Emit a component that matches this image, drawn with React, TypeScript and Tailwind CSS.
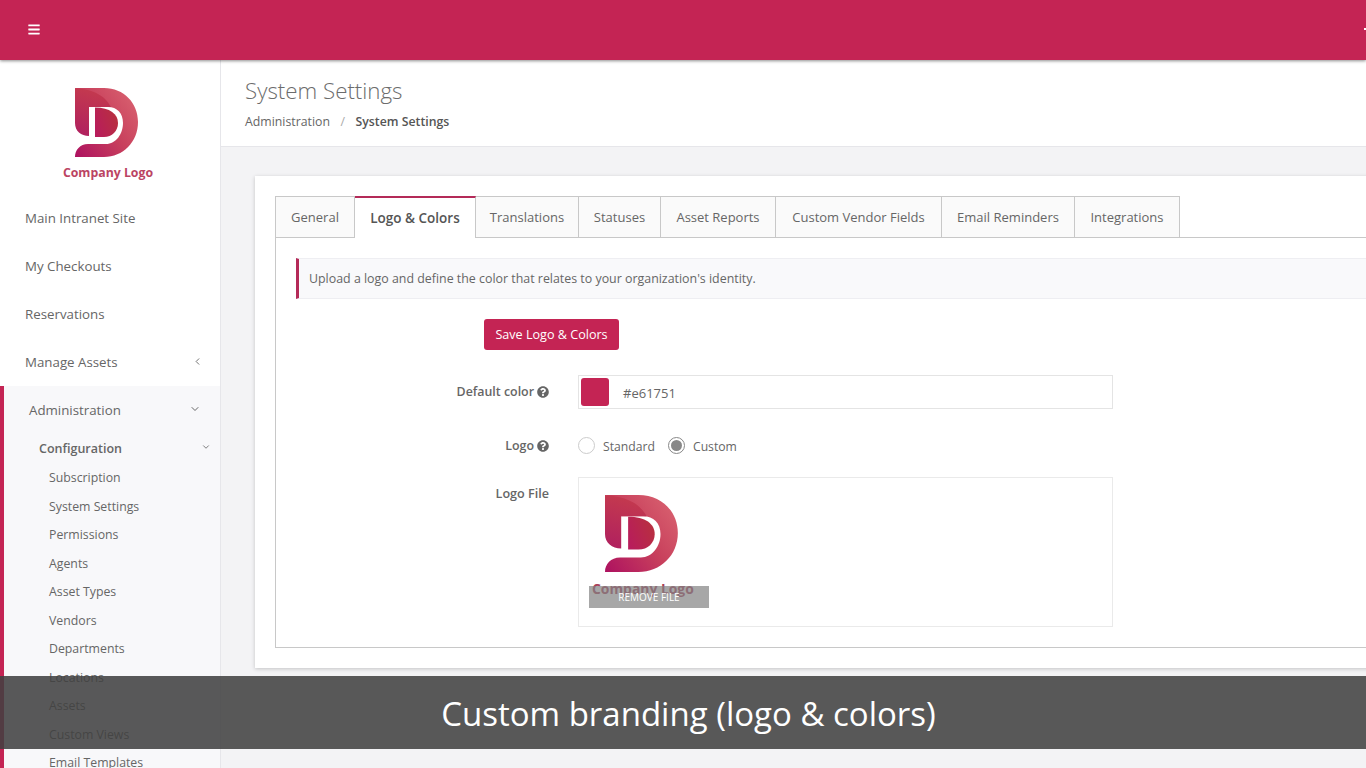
import { ChevronDown, ChevronLeft } from "lucide-react";
import { FaBars, FaQuestionCircle } from "react-icons/fa";

function LogoMark({ id, className }: { id: string; className: string }) {
  return (
    <svg viewBox="75 88 64 70" className={className} preserveAspectRatio="none">
      <defs>
        <linearGradient id={id + "a"} x1="0" y1="1" x2="1" y2="0.2">
          <stop offset="0" stopColor="#ad1160" />
          <stop offset="0.55" stopColor="#c8405c" />
          <stop offset="1" stopColor="#d8606f" />
        </linearGradient>
        <linearGradient id={id + "b"} x1="0.2" y1="1" x2="0.4" y2="0">
          <stop offset="0" stopColor="#b0205f" />
          <stop offset="1" stopColor="#c43a4e" />
        </linearGradient>
        <linearGradient id={id + "c"} x1="0" y1="0.8" x2="1" y2="0.3">
          <stop offset="0" stopColor="#b81c5c" />
          <stop offset="1" stopColor="#b8303f" />
        </linearGradient>
      </defs>
      <path
        d="M75 88 H104 C124 88 138 103 138 122 C138 142 123 157 104 157 H75 C75 150 80 144 88 144 H106 C116 144 123 134 123 123 C123 113 117 107 108 107 H89 C87 97 80 91 75 88 Z"
        fill={`url(#${id}a)`}
      />
      <path d="M75 88 C98 90 106 98 111 107 H89 V136 C81 136 75 131 75 123 Z" fill={`url(#${id}b)`} />
      <path d="M95 107.5 C110 107.5 118 114 118 123 C118 131 112 137 104 137 H95 Z" fill={`url(#${id}c)`} />
    </svg>
  );
}

const tabs = [
  { t: "Translations", c: "w-[103px]" },
  { t: "Statuses", c: "w-[82px]" },
  { t: "Asset Reports", c: "w-[115px]" },
  { t: "Custom Vendor Fields", c: "w-[166px]" },
  { t: "Email Reminders", c: "w-[133px]" },
  { t: "Integrations", c: "w-[105px]" },
];
const subs = ["Subscription", "System Settings", "Permissions", "Agents", "Asset Types", "Vendors", "Departments", "Locations", "Assets", "Custom Views", "Email Templates"];

export default function App() {
  return (
    <div className="relative h-[768px] w-[1366px] overflow-hidden bg-[#f3f3f5] text-[13.3px] text-[#666] [font-family:'Open_Sans',sans-serif]">
      <header className="relative z-20 flex h-[60px] items-center justify-between bg-[#c42454] pb-[2px] pl-[28px] shadow-[0_1px_3px_rgba(0,0,0,0.45)]">
        <FaBars className="h-[13px] w-[12px] text-white" />
        <span className="h-[2px] w-[2px] bg-white" />
      </header>
      <div className="flex h-[708px]">
        <aside className="flex h-full w-[221px] shrink-0 flex-col overflow-hidden border-r border-[#e6e6ea] bg-white">
          <div className="flex h-[134px] shrink-0 flex-col items-center pt-[28px]">
            <LogoMark id="s" className="mr-[6px] h-[70px] w-[64px] shrink-0" />
            <span className="mt-[6px] ml-[-4px] text-[12.3px] leading-[18px] font-bold text-[#bb4463]">Company Logo</span>
          </div>
          {["Main Intranet Site", "My Checkouts", "Reservations"].map((t) => (
            <div key={t} className="flex h-[48px] shrink-0 items-center pt-[2px] pl-[25px]">{t}</div>
          ))}
          <div className="flex h-[48px] shrink-0 items-center justify-between pt-[2px] pr-[17px] pl-[25px]">
            Manage Assets <ChevronLeft className="mb-[4px] h-[11px] w-[11px]" />
          </div>
          <div className="flex-1 border-l-4 border-[#c42454] bg-[#f8f8fa]">
            <div className="flex h-[48px] items-center justify-between pt-[2px] pr-[19px] pl-[25px]">
              Administration <ChevronDown className="mb-[4px] h-[12px] w-[12px]" />
            </div>
            <div className="flex h-[28px] items-center justify-between pt-[2px] pr-[9px] pl-[35px] text-[12.5px] font-semibold">
              Configuration <ChevronDown className="mb-[4px] h-[10px] w-[10px]" />
            </div>
            <div className="mt-[1px] pl-[45px] text-[12.3px]">
              {subs.map((t) => (
                <div key={t} className="flex h-[28.5px] items-center pt-[2px]">{t}</div>
              ))}
            </div>
          </div>
        </aside>
        <main className="min-w-0 flex-1">
          <div className="h-[87px] border-b border-[#e6e6ea] bg-white pt-[15px] pl-[24px]">
            <h1 className="text-[22.3px] leading-[32px] font-light text-[#6c6c6c]">System Settings</h1>
            <div className="mt-[5px] flex items-center text-[12.3px] leading-[20px]">
              <span>Administration</span>
              <span className="mx-[10.5px] text-[#aaa]">/</span>
              <span className="font-semibold text-[#555]">System Settings</span>
            </div>
          </div>
          <div className="mt-[29px] ml-[34px] h-[492px] w-[1200px] bg-white px-[20px] pt-[20px] shadow-[0_1px_4px_rgba(0,0,0,0.2)]">
            <div className="flex h-[42px] border-b border-[#c8c8c8] text-[13px]">
              <div className="flex h-[41px] w-[80px] items-center justify-center border border-b-0 border-[#c8c8c8] bg-[#fafafa] pt-[2px]">General</div>
              <div className="z-10 flex h-[42px] w-[121px] items-center justify-center border-t-2 border-r border-t-[#b42a58] border-r-[#c8c8c8] bg-white pt-[1px] text-[13.5px] font-semibold text-[#555]">Logo &amp; Colors</div>
              {tabs.map(({ t, c }) => (
                <div key={t} className={`flex h-[41px] items-center justify-center border-t border-r border-[#c8c8c8] bg-[#fafafa] pt-[2px] ${c}`}>{t}</div>
              ))}
            </div>
            <div className="h-[410px] border-x border-b border-[#c8c8c8] px-[20px] pt-[20px]">
              <div className="flex h-[41px] items-center border border-l-[3px] border-[#eeeef2] border-l-[#b42a58] bg-[#f9f9fb] pt-[1px] pl-[10px] text-[12.4px]">
                Upload a logo and define the color that relates to your organization's identity.
              </div>
              <button className="mt-[20px] ml-[188px] flex h-[31px] w-[135px] items-center justify-center rounded-[3px] bg-[#c42454] pt-[2px] text-[12.6px] text-white">
                Save Logo &amp; Colors
              </button>
              <div className="mt-[25px] flex h-[34px] items-center">
                <div className="flex w-[253px] items-center justify-end gap-[3px] text-[12.4px] font-semibold text-[#666]">
                  Default color <FaQuestionCircle className="h-[12px] w-[12px]" />
                </div>
                <div className="ml-[29px] flex h-[34px] w-[535px] items-center border border-[#e4e4e4] pl-[2px]">
                  <span className="h-[28px] w-[28px] rounded-[3px] bg-[#c42454]" />
                  <span className="ml-[14px] pt-[3px] text-[13px]">#e61751</span>
                </div>
              </div>
              <div className="mt-[25px] flex h-[24px] items-center">
                <div className="flex w-[253px] items-center justify-end gap-[3px] text-[12.4px] font-semibold">
                  Logo <FaQuestionCircle className="h-[12px] w-[12px]" />
                </div>
                <div className="ml-[29px] flex items-center text-[12.2px]">
                  <span className="h-[17px] w-[17px] rounded-full border border-[#ccc] bg-white" />
                  <span className="ml-[8px] pt-[2px]">Standard</span>
                  <span className="ml-[13px] flex h-[17px] w-[17px] items-center justify-center rounded-full border border-[#888]">
                    <span className="h-[11px] w-[11px] rounded-full bg-[#888]" />
                  </span>
                  <span className="ml-[8px] pt-[2px]">Custom</span>
                </div>
              </div>
              <div className="mt-[19px] flex">
                <div className="w-[253px] pt-[7px] text-right text-[12.6px] leading-[20px] font-semibold">Logo File</div>
                <div className="relative ml-[29px] h-[150px] w-[535px] border border-[#eaeaea]">
                  <div className="flex flex-col items-start pt-[17px] pl-[26px]">
                    <LogoMark id="f" className="h-[78px] w-[74px]" />
                    <span className="mt-[6px] ml-[-13px] text-[13.9px] leading-[20px] font-bold text-[#a8405a]">Company Logo</span>
                  </div>
                  <div className="absolute top-[108px] left-[10px] flex h-[22px] w-[120px] items-center justify-center bg-[rgba(130,130,130,0.7)] text-[10px] text-white">
                    REMOVE FILE
                  </div>
                </div>
              </div>
            </div>
          </div>
        </main>
      </div>
      <div className="absolute top-[676px] left-0 z-30 flex h-[73px] w-full items-center justify-center bg-[rgba(64,64,64,0.87)] pt-[2px] pl-[11px] text-[33px] text-white">
        Custom branding (logo &amp; colors)
      </div>
    </div>
  );
}
